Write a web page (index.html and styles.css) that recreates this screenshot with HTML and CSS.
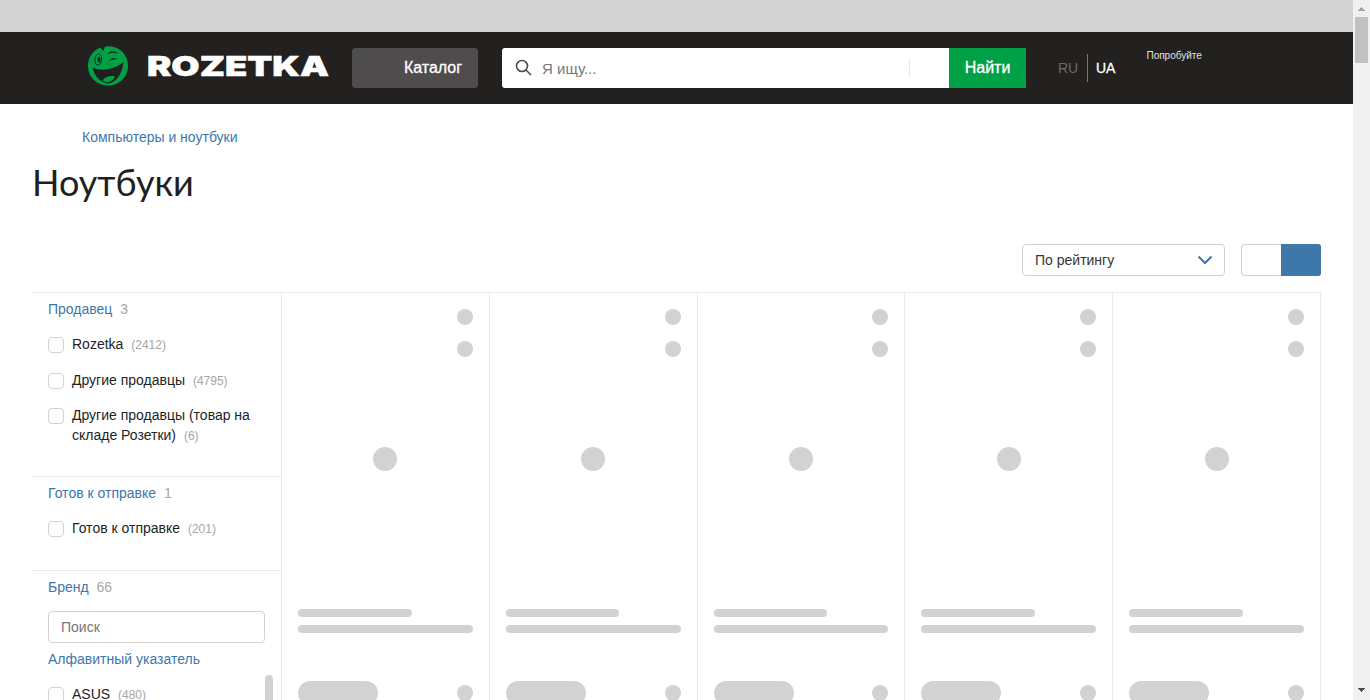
FILE: index.html
```html
<!DOCTYPE html>
<html lang="ru">
<head>
<meta charset="utf-8">
<title>Ноутбуки</title>
<link rel="stylesheet" href="styles.css">
</head>
<body>
<div class="page">
  <div class="promo"></div>
  <header class="header">
    <a class="logo">
      <svg class="logo-face" width="40" height="40" viewBox="0 0 40 40">
        <path fill="#00a046" d="M12.600 1.600C14 3 13.500 4.500 15 4.500C16.500 4.500 15.500 1.500 17.500 .700C20 .100 23 .200 26 1C35 3.500 40 11.500 40 20C40 31 31 39.500 20 39.500C9 39.500 0 31 0 20C0 11.500 5 4.500 12.600 1.600Z"/>
        <path fill="#221f1f" d="M4.500 21.500C14 26 26 23.500 35.500 16C34.500 27 29 36 20.500 37.500C13 37 6 30 4.500 21.500Z"/>
        <path fill="#00a046" d="M14.500 34.500C17 31 21 29.300 27 30.300C25.500 34 22.500 36.200 20 36.300C18 36.300 16 35.500 14.500 34.500Z"/>
        <ellipse cx="10.200" cy="13.500" rx="3.300" ry="5.600" fill="none" stroke="#221f1f" stroke-width=".9" transform="rotate(8 10.200 13.500)"/>
        <ellipse cx="11" cy="13.500" rx="1.400" ry="2.800" fill="#221f1f"/>
        <path fill="#221f1f" d="M19 8.500C21 4.500 27 4 30 7.500C26 6.500 22.500 6.500 19 8.500ZM21 15.500C23 11.500 26.500 11 29.500 13.500C26 13 23.500 13.800 21 15.500Z"/>
      </svg>
      <svg class="logo-word" width="184" height="32" viewBox="0 0 184 32"><text x="0" y="26" textLength="182" lengthAdjust="spacingAndGlyphs">ROZETKA</text></svg>
    </a>
    <button class="catalog">Каталог</button>
    <div class="search">
      <svg class="search-icon" width="18" height="18" viewBox="0 0 18 18"><circle cx="7" cy="7" r="5.500"/><path d="M11 11L16 16"/></svg>
      <span class="search-hint">Я ищу...</span>
      <span class="search-line"></span>
      <button class="find">Найти</button>
    </div>
    <div class="lang"><span class="lang-ru">RU</span><span class="lang-ua">UA</span></div>
    <span class="try">Попробуйте</span>
  </header>
  <main class="main">
    <a class="crumb">Компьютеры и ноутбуки</a>
    <h1 class="title">Ноутбуки</h1>
    <div class="settings">
      <div class="select"><span>По рейтингу</span><svg width="16" height="10" viewBox="0 0 16 10"><path d="M1.500 1.500L8 8L14.500 1.500"/></svg></div>
      <div class="view"><span class="view-on"></span></div>
    </div>
    <div class="layout">
      <aside class="filters">
        <section class="block block-seller">
          <div class="block-title">Продавец <i>3</i></div>
          <div class="item"><b></b><span>Rozetka <i>(2412)</i></span></div>
          <div class="item"><b></b><span>Другие продавцы <i>(4795)</i></span></div>
          <div class="item"><b></b><span>Другие продавцы (товар на складе Розетки) <i>(6)</i></span></div>
        </section>
        <section class="block block-ready">
          <div class="block-title">Готов к отправке <i>1</i></div>
          <div class="item"><b></b><span>Готов к отправке <i>(201)</i></span></div>
        </section>
        <section class="block block-brand">
          <div class="block-title">Бренд <i>66</i></div>
          <div class="brand-search">Поиск</div>
          <a class="alpha">Алфавитный указатель</a>
          <div class="brand-list">
            <div class="item"><b></b><span>ASUS <i>(480)</i></span></div>
            <span class="list-thumb"></span>
          </div>
        </section>
      </aside>
      <div class="grid">
        <div class="card"><div class="dots"><u></u><u></u></div><div class="loader"></div><div class="bar short"></div><div class="bar"></div><div class="price"><em></em><u></u></div></div>
        <div class="card"><div class="dots"><u></u><u></u></div><div class="loader"></div><div class="bar short"></div><div class="bar"></div><div class="price"><em></em><u></u></div></div>
        <div class="card"><div class="dots"><u></u><u></u></div><div class="loader"></div><div class="bar short"></div><div class="bar"></div><div class="price"><em></em><u></u></div></div>
        <div class="card"><div class="dots"><u></u><u></u></div><div class="loader"></div><div class="bar short"></div><div class="bar"></div><div class="price"><em></em><u></u></div></div>
        <div class="card"><div class="dots"><u></u><u></u></div><div class="loader"></div><div class="bar short"></div><div class="bar"></div><div class="price"><em></em><u></u></div></div>
      </div>
    </div>
  </main>
</div>
<div class="scrollbar">
  <svg width="7" height="4" viewBox="0 0 7 4" shape-rendering="crispEdges"><path fill="#a3a3a3" d="M3 0h1v1h1v1h1v1h1v1H0V3h1V2h1V1h1z"/></svg>
  <div class="scroll-thumb"></div>
  <svg class="scroll-down" width="7" height="4" viewBox="0 0 7 4" shape-rendering="crispEdges"><path fill="#505050" d="M0 0h7v1H6v1H5v1H4v1H3V3H2V2H1V1H0z"/></svg>
</div>
</body>
</html>
```
FILE: styles.css
```css
* { box-sizing: border-box; }
body {
  margin: 0;
  display: flex;
  height: 700px;
  overflow: hidden;
  background: #fff;
  color: #221f1f;
  font: 14px/20px "Liberation Sans", Arial, sans-serif;
}
button { border: 0; padding: 0; color: #fff; font: 16px/40px "Liberation Sans", Arial, sans-serif; }
i { font-style: normal; line-height: 1; }
.page { width: 1353px; height: 700px; overflow: hidden; }
.promo { height: 32px; background: #d2d2d2; }
.header {
  display: flex;
  align-items: flex-start;
  height: 72px;
  padding: 16px 0 0 88px;
  background: #22211f;
}
.logo { display: flex; width: 264px; }
.logo-face { flex: none; margin-top: -2px; }
.logo-word { flex: none; margin: 2px 0 0 19px; }
.logo-word text { font: 900 27.500px Inter, sans-serif; fill: #fff; stroke: #fff; stroke-width: .5; }
.catalog {
  width: 126px;
  height: 40px;
  margin-right: 24px;
  padding-left: 36px;
  border-radius: 4px;
  background: #4e4c4d;
  -webkit-text-stroke: .3px #fff;
}
.search { display: flex; align-items: center; width: 524px; height: 40px; border-radius: 3px; background: #fff; overflow: hidden; }
.search-icon { margin-left: 13px; fill: none; stroke: #4b4b4b; stroke-width: 1.600; }
.search-hint { flex: 1; padding: 2px 0 0 9px; font-size: 15px; color: #777; }
.search-line { width: 1px; height: 20px; margin-right: 39px; background: #e9e9e9; }
.find { width: 77px; height: 40px; background: #00a046; -webkit-text-stroke: .3px #fff; }
.lang { display: flex; height: 28px; margin: 6px 0 0 32px; line-height: 28px; }
.lang-ru { width: 30px; border-right: 1px solid #777; color: #6c6b6b; }
.lang-ua { padding-left: 8px; color: #fff; -webkit-text-stroke: .3px #fff; }
.try { margin: 2px 0 0 31px; font-size: 10px; line-height: 12px; color: #e2e2e2; }
.main { padding: 0 32px; }
.crumb { display: block; margin: 23px 0 0 50px; color: #3e77aa; }
.title { height: 48px; margin: 11px 0 0; font: 400 36px/48px Lato, sans-serif; letter-spacing: 0; }
.settings { display: flex; justify-content: flex-end; gap: 16px; margin-top: 38px; }
.select {
  display: flex;
  align-items: center;
  justify-content: space-between;
  width: 203px;
  height: 32px;
  padding: 0 11px 0 12px;
  border: 1px solid #d2d2d2;
  border-radius: 4px;
  color: #333;
}
.select svg { fill: none; stroke: #3e77aa; stroke-width: 2; }
.view { display: flex; justify-content: flex-end; width: 80px; height: 32px; border: 1px solid #d2d2d2; border-right: 0; border-radius: 4px; }
.view-on { width: 40px; height: 32px; margin-top: -1px; border-radius: 0 3px 3px 0; background: #3e77aa; }
.layout { display: flex; margin-top: 16px; }
.filters { width: 249px; }
.block { padding: 6px 16px 0; border-top: 1px solid #e9e9e9; }
.block-seller { height: 184px; }
.block-ready { height: 94px; }
.block-title { margin-bottom: 15px; color: #3e77aa; }
.block-title i { margin-left: 4px; color: #a6a5a5; }
.item { display: flex; gap: 8px; margin-bottom: 15.500px; }
.item b { flex: none; width: 16px; height: 16px; margin-top: 3px; border: 1px solid #d2d2d2; border-radius: 4px; }
.item i { margin-left: 4px; font-size: 12px; color: #a6a5a5; }
.brand-search { width: 217px; height: 32px; margin-top: -1px; padding: 0 12px; border: 1px solid #d2d2d2; border-radius: 4px; line-height: 30px; color: #757575; }
.alpha { display: block; margin-top: 6px; color: #3e77aa; }
.brand-list { display: flex; justify-content: space-between; margin-top: 6px; margin-right: -8px; }
.brand-list .item { margin-top: 9px; }
.list-thumb { width: 8px; height: 60px; border-radius: 4px; background: #d2d2d2; }
.grid { display: grid; grid-template-columns: repeat(5, 1fr); width: 1040px; height: 500px; border-top: 1px solid #e9e9e9; border-left: 1px solid #e9e9e9; }
.card { padding: 16px 16px 0; border-right: 1px solid #e9e9e9; }
.dots { display: flex; flex-direction: column; align-items: flex-end; gap: 16px; }
u { width: 16px; height: 16px; border-radius: 50%; background: #d2d2d2; }
.loader { width: 24px; height: 24px; margin: 90px auto 138px; border-radius: 50%; background: #d2d2d2; }
.bar { height: 8px; margin-bottom: 8px; border-radius: 4px; background: #d2d2d2; }
.short { width: 65%; }
.price { display: flex; align-items: center; justify-content: space-between; margin-top: 48px; }
.price em { width: 80px; height: 24px; border-radius: 12px; background: #d2d2d2; }
.scrollbar { display: flex; flex-direction: column; align-items: center; width: 17px; height: 700px; padding: 7px 0 8px; background: #f0f0f0; }
.scroll-thumb { width: 13px; height: 46px; margin-top: 6px; background: #c1c1c1; }
.scroll-down { margin-top: auto; }
```
